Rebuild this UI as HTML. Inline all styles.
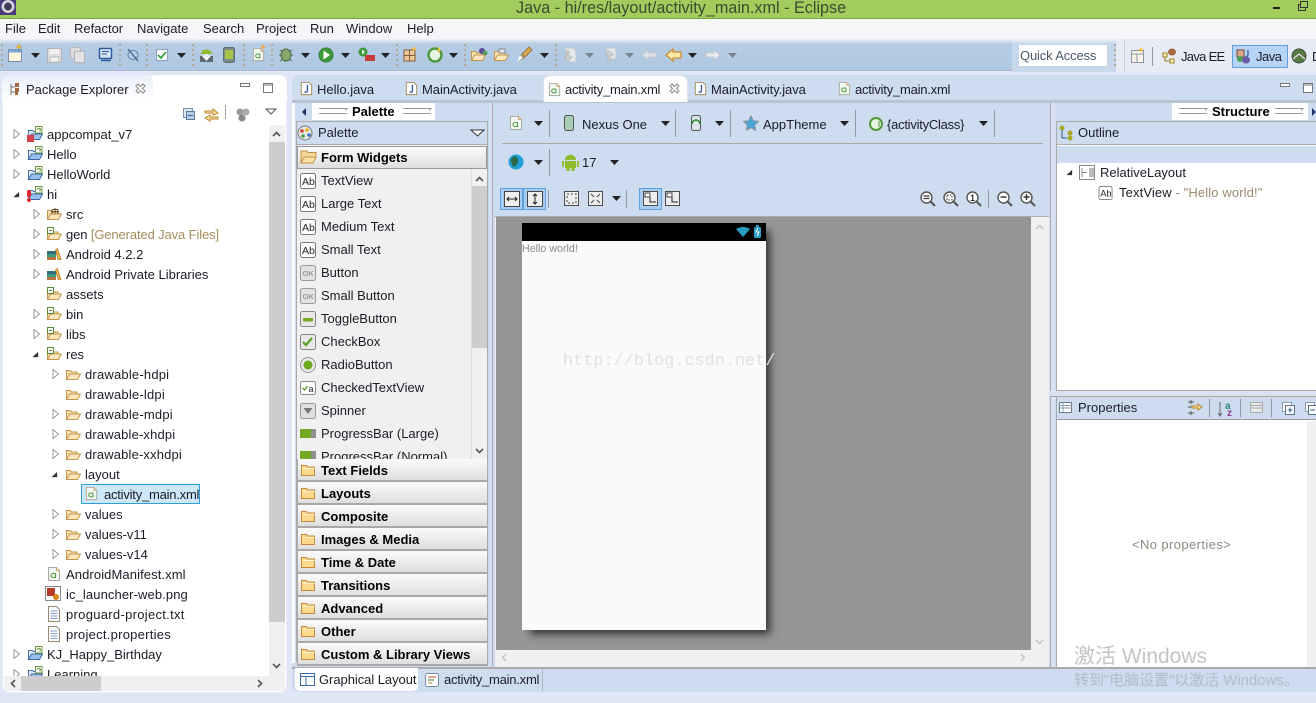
<!DOCTYPE html>
<html><head><meta charset="utf-8"><style>
html,body{margin:0;padding:0}
body{position:relative;width:1316px;height:703px;overflow:hidden;background:#dfe6f5;font:13px/20px "Liberation Sans","Noto Sans CJK SC",sans-serif;color:#1c1c28}
div{position:absolute;box-sizing:border-box}
svg{position:absolute;left:0;top:0;overflow:visible}
.t{white-space:nowrap;height:20px}
.b{font-weight:bold;color:#000}
.cat{left:297px;width:191px;height:23px;background:linear-gradient(#fbfbfb,#dedede);border-bottom:2px solid #a8a8a8;border-right:1px solid #aaa;border-left:1px solid #aaa}
.sep{width:1px;background:#8b98a8}
.dots{width:2px;height:24px;top:44px;background:repeating-linear-gradient(#b0a98f 0 2px,transparent 2px 5px)}
.am{letter-spacing:-.22px}
</style></head><body>
<svg width="0" height="0" style="position:absolute"><defs>
<symbol id="fo" viewBox="0 0 16 16"><path d="M1.5 13.5V4.5h4l1 1.5h5.500v2" fill="#f9e2b4" stroke="#c4954a"/><path d="M1.500 13.500l3-5.500h11l-3 5.500z" fill="#fbe6bd" stroke="#c4954a"/></symbol>
<symbol id="fa" viewBox="0 0 16 16"><use href="#fo" width="16" height="16"/><rect x="1.500" y="1.500" width="6" height="6" fill="#fff" stroke="#5c8a3a"/><path d="M3 4.500h3" stroke="#5c8a3a"/></symbol>
<symbol id="pk" viewBox="0 0 16 16"><use href="#fo" width="16" height="16"/><path d="M6 3.500h6v5M6 3.500v4.500M9 2v6M5 5.500h8" stroke="#6e4a2a" fill="none"/></symbol>
<symbol id="pr" viewBox="0 0 16 16"><path d="M1.500 13.500V4.500h4l1 1h5v3" fill="#dfeafa" stroke="#4a6ea8"/><path d="M1.500 13.500l3-5.500h11l-3 5.500z" fill="#9cc0ee" stroke="#3e6aa8"/><rect x="8.500" y=".5" width="6.500" height="6.500" fill="#fff" stroke="#6f9440"/><path d="M10.500 3.800a1.500 1.500 0 1 1 2.600 1M13 2.500v3" stroke="#6f9440" fill="none"/></symbol>
<symbol id="fc" viewBox="0 0 16 16"><path d="M1.500 13.500V3.500h5l1 1.500h7v8.500z" fill="#fcd98c" stroke="#c48a3a"/><path d="M2 6.500h12.500" stroke="#fff1c8"/></symbol>
<symbol id="ab" viewBox="0 0 16 16"><rect x=".5" y=".5" width="15" height="15" rx="2" fill="#fff" stroke="#777"/><text x="2" y="12" font-family="Liberation Sans" font-size="10.500" fill="#222">Ab</text></symbol>
<symbol id="ok" viewBox="0 0 16 16"><rect x=".5" y=".5" width="15" height="15" rx="2" fill="#e2e2e2" stroke="#9a9a9a"/><text x="2.500" y="11" font-family="Liberation Sans" font-size="7.500" font-weight="bold" fill="#9a9a9a">OK</text></symbol>
<symbol id="xm" viewBox="0 0 16 16"><path d="M2.500 1.500h8l3 3v10h-11z" fill="#f2f7f4" stroke="#a8a8a0"/><path d="M10.500 1.500v3h3" fill="#f5e4c0" stroke="#c8a870"/><path d="M9.500 7.500H7a2 2 0 0 0 0 4h2.500v-4" fill="none" stroke="#4f9a3c" stroke-width="1.100"/></symbol>
<symbol id="jv" viewBox="0 0 16 16"><path d="M2.500 1.500h8l3 3v10h-11z" fill="#fff" stroke="#a58c5c"/><path d="M9 4v6.500c0 1.500-2 1.800-3 .8" fill="none" stroke="#3e5e9e" stroke-width="1.500"/></symbol>
<symbol id="tx" viewBox="0 0 16 16"><path d="M2.500 .5h8l3 3v12h-11z" fill="#f6f9fd" stroke="#9a8a6c"/><path d="M4.500 5h7M4.500 7.500h7M4.500 10h7M4.500 12.500h7" stroke="#8ca4c8"/></symbol>
<symbol id="lb" viewBox="0 0 16 16"><rect x="1" y="11" width="9" height="3" fill="#b8733e"/><rect x="1" y="8" width="9" height="3" fill="#3d9a80"/><rect x="1" y="5" width="9" height="3" fill="#2f6e7a"/><path d="M9.500 4l2-1.500 3.500 11h-3z" fill="#e9b14a" stroke="#b07a28" stroke-width=".7"/></symbol>
<symbol id="cl" viewBox="0 0 8 10"><path d="M1 .5l5.500 4.500L1 9.500z" fill="#fff" stroke="#9a9a9a"/></symbol>
<symbol id="op" viewBox="0 0 8 8"><path d="M.5 7L7 1v6z" fill="#333"/></symbol>
<symbol id="dr" viewBox="0 0 9 5"><path d="M0 0h9L4.500 5z" fill="#222"/></symbol>
<symbol id="dg" viewBox="0 0 9 5"><path d="M0 0h9L4.500 5z" fill="#7a8490"/></symbol>
<symbol id="zm" viewBox="0 0 16 16"><circle cx="6.500" cy="6.500" r="5.500" fill="#fff" stroke="#555" stroke-width="1.400"/><path d="M10.500 10.500l4.500 4.500" stroke="#555" stroke-width="2"/></symbol>
<symbol id="box" viewBox="0 0 16 16"><rect x=".5" y=".5" width="15" height="15" fill="#eee" stroke="#444"/></symbol>
<symbol id="min" viewBox="0 0 10 6"><rect x=".5" y=".5" width="9" height="3" fill="#fff" stroke="#777"/></symbol>
<symbol id="max" viewBox="0 0 10 10"><rect x=".5" y=".5" width="9" height="9" fill="#fff" stroke="#777"/><path d="M.5 2h9" stroke="#777"/></symbol>
<symbol id="x" viewBox="0 0 11 11"><path d="M1 3l2-2 2.500 2.500L8 1l2 2-2.500 2.500L10 8l-2 2-2.500-2.500L3 10 1 8l2.500-2.500z" fill="#fff" stroke="#8a8a8a"/></symbol>
</defs></svg>

<div style="left:0;top:0;width:1316px;height:18px;background:#a2cd5c"></div>
<div style="left:0;top:18px;width:1316px;height:1px;background:#7da33e"></div>
<div style="left:0;top:0;width:16px;height:15px;background:#4d3b7d"></div>
<div class="t" style="left:516px;top:-2px;font-size:16.200px;color:#3a4a32">Java - hi/res/layout/activity_main.xml - Eclipse</div>

<div style="left:0;top:19px;width:1316px;height:20px;background:#f5f6f7"></div>
<div class="t" style="left:5px;top:19px">File</div>
<div class="t" style="left:38px;top:19px">Edit</div>
<div class="t" style="left:74px;top:19px">Refactor</div>
<div class="t" style="left:137px;top:19px">Navigate</div>
<div class="t" style="left:203px;top:19px">Search</div>
<div class="t" style="left:256px;top:19px">Project</div>
<div class="t" style="left:310px;top:19px">Run</div>
<div class="t" style="left:346px;top:19px">Window</div>
<div class="t" style="left:407px;top:19px">Help</div>

<div style="left:0;top:39px;width:1316px;height:33px;background:#e7ebf6"></div>
<div style="left:0;top:39px;width:1012px;height:32px;background:linear-gradient(#eef1f6,#b5cce4 5px,#afc8e2);border-bottom:1px solid #a9b7d2"></div>
<div style="left:1012px;top:39px;width:104px;height:33px;background:linear-gradient(#eef1f6,#c5d7ec 5px,#c8d9ec)"></div>
<div style="left:1018px;top:44px;width:90px;height:23px;background:#fff;border:1px solid #c8d4e4"></div>
<div class="t" style="left:1020px;top:46px;color:#4c5a68;letter-spacing:-.15px">Quick Access</div>
<div style="left:1124px;top:39px;width:192px;height:33px;background:#e7ebf6;border-left:1px solid #c5cfdf"></div>
<div style="left:1232px;top:45px;width:56px;height:23px;background:#b6d4f5;border:1px solid #5ea0e0"></div>
<div class="t" style="left:1181px;top:47px;letter-spacing:-.7px">Java EE</div>
<div class="t" style="left:1256px;top:47px;letter-spacing:-.5px">Java</div>
<div class="t" style="left:1312px;top:47px">D</div>
<div class="sep" style="left:1152px;top:47px;height:19px"></div>

<div class="dots" style="left:1px"></div><div class="dots" style="left:119px"></div><div class="dots" style="left:146px"></div><div class="dots" style="left:192px"></div><div class="dots" style="left:243px"></div><div class="dots" style="left:271px"></div><div class="dots" style="left:396px"></div><div class="dots" style="left:464px"></div><div class="dots" style="left:555px"></div><div class="dots" style="left:1114px"></div>

<svg width="1316" height="703">
<rect x="8.500" y="49.500" width="13" height="12" fill="#fdf6df" stroke="#7b8ba5"/><path d="M8.500 49.500h13v3h-13z" fill="#7ba4d6"/><path d="M19 44l1 2 2 .5-2 1-1 2-1-2-2-1 2-.5z" fill="#f5c242" stroke="#c08a20" stroke-width=".5"/>
<use href="#dr" x="31" y="53" width="9" height="5"/>
<rect x="47.500" y="48.500" width="14" height="14" rx="1" fill="#dedede" stroke="#b4b4b4"/><rect x="50" y="49" width="9" height="5" fill="#f2f2f2"/><rect x="50" y="57" width="9" height="5" fill="#f2f2f2" stroke="#bbb"/>
<rect x="70.500" y="47.500" width="10" height="11" fill="#ddd" stroke="#bbb"/><rect x="74.500" y="51.500" width="10" height="11" fill="#e4e4e4" stroke="#b4b4b4"/>
<rect x="99.500" y="48.500" width="12" height="10" rx="1" fill="#d8e4f4" stroke="#2a5c9e" stroke-width="1.500"/><path d="M102 51.500h7M102 54h5" stroke="#2a5c9e"/><path d="M101 60.500h10" stroke="#2a5c9e" stroke-width="1.500"/>
<ellipse cx="133" cy="55" rx="5" ry="4.500" fill="#b8d0ec" stroke="#5c7ca8"/><path d="M128 49l10 12" stroke="#3c5c88" stroke-width="1.300"/>
<rect x="156.500" y="49.500" width="11" height="11" fill="#fff" stroke="#8aa0bc"/><path d="M158 55l3 3 5-6" stroke="#2f9a3c" stroke-width="1.700" fill="none"/>
<use href="#dr" x="177" y="53" width="9" height="5"/>
<path d="M200 56h13v6h-13z" fill="#5e6870"/><path d="M206.500 50v9M203 55.500l3.500 4 3.500-4" stroke="#fff" stroke-width="2" fill="none"/><path d="M201 54c0-6 11-6 11 0z" fill="#8fbb2c"/>
<rect x="223.500" y="47.500" width="11" height="15" rx="2" fill="#7d8a8c" stroke="#5c6c6c"/><rect x="225" y="50" width="8" height="9" fill="#a4c644"/>
<use href="#xm" x="251" y="47" width="15" height="15"/><path d="M263 44l1 2 2 .5-2 1-1 2-1-2-2-1 2-.5z" fill="#f5a842"/>
<ellipse cx="286" cy="55" rx="5" ry="6" fill="#8aa86c" stroke="#4e6a48"/><path d="M280 50l3 2M292 50l-3 2M279 55h3M293 55h-3M280 61l3-2M292 61l-3-2" stroke="#4e6a48"/>
<use href="#dr" x="301" y="53" width="9" height="5"/>
<circle cx="326" cy="55" r="7" fill="#3f9a3a" stroke="#2f7f30"/><path d="M323.500 50.500l6.500 4.500-6.500 4.500z" fill="#fff"/>
<use href="#dr" x="341" y="53" width="9" height="5"/>
<circle cx="363" cy="52" r="4.500" fill="#3f9a3a"/><path d="M362 49.500l3 2.500-3 2.500z" fill="#fff"/><rect x="365" y="55" width="10" height="6" fill="#c83a3a"/>
<use href="#dr" x="381" y="53" width="9" height="5"/>
<rect x="404" y="50" width="11" height="11" fill="#e8c89c" stroke="#8a5a30"/><path d="M404 55.500h11M409.500 50v11" stroke="#8a5a30"/><path d="M414 46l1 2 2 .5-2 1-1 2-1-2-2-1 2-.5z" fill="#f5c242"/>
<circle cx="435" cy="55" r="6.500" fill="#eaf4e4" stroke="#4f9a3c" stroke-width="2.500"/><path d="M438 47l3 3-3 3z" fill="#f5c242"/>
<use href="#dr" x="449" y="53" width="9" height="5"/>
<use href="#fo" x="470" y="47" width="16" height="16"/><circle cx="482" cy="51" r="3" fill="#5a4a9a"/><circle cx="485" cy="53" r="2.500" fill="#5a9a5c"/>
<use href="#fo" x="493" y="47" width="16" height="16"/><rect x="499" y="49" width="6" height="4" fill="#e0e4ea" stroke="#888"/>
<path d="M518 61l3-6 3 3zM522 54l7-7 3 3-7 7z" fill="#d9a64a" stroke="#8a6a3a" stroke-width=".8"/><path d="M517 62l3-7 3 3z" fill="#fff"/>
<use href="#dr" x="540" y="53" width="9" height="5"/>
<path d="M565 48h8l3 3v11h-8z" fill="#e4e8ee" stroke="#c0c4c8"/><path d="M567 51v6h-3l4 4 4-4h-3v-6z" fill="#d4d6d4" stroke="#b8b8b0"/>
<use href="#dg" x="585" y="53" width="9" height="5"/>
<path d="M606 48h10v11h-6z" fill="#e4e8ee" stroke="#c0c4c8"/><path d="M608 61v-6h-3l4-4 4 4h-3v6z" fill="#d4d6d4" stroke="#b8b8b0"/>
<use href="#dg" x="625" y="53" width="9" height="5"/>
<path d="M642 55l6-5v3h8v4h-8v3z" fill="#dfe2e6" stroke="#c4c8cc"/>
<path d="M666 55l7-6v3h8v6h-8v3z" fill="#fde8a8" stroke="#c89030" stroke-width="1.300"/>
<use href="#dr" x="688" y="53" width="9" height="5"/>
<path d="M720 55l-6-5v3h-8v4h8v3z" fill="#e8ebef" stroke="#c4c8cc"/>
<use href="#dg" x="728" y="53" width="9" height="5"/>
<rect x="1131.500" y="50.500" width="12" height="12" fill="#f8f4e8" stroke="#8a94a4"/><path d="M1131 54h12M1137 54v9" stroke="#8a94a4"/><path d="M1141 47l1 2 2 .5-2 1-1 2-1-2-2-1 2-.5z" fill="#f5c242"/>
<rect x="1163" y="53" width="4" height="4" fill="#fdf0c0" stroke="#a08020"/><rect x="1170" y="59" width="4" height="4" fill="#fdf0c0" stroke="#a08020"/><path d="M1165 57v4h5" stroke="#a08020" fill="none"/><ellipse cx="1172" cy="52" rx="4" ry="3.500" fill="#a5683c"/>
<rect x="1237" y="50" width="7" height="7" fill="#d4a888" stroke="#7a4a38"/><circle cx="1240" cy="59" r="3" fill="#48a050"/><ellipse cx="1246" cy="60" rx="4" ry="3.500" fill="#6a58a8"/><path d="M1248 50v5c0 1-1 2-2 1" stroke="#3a5a9e" stroke-width="1.300" fill="none"/>
<circle cx="1299" cy="56" r="7" fill="#5a7a4a" stroke="#3a4a38"/><path d="M1293 59l6-5 6 5" stroke="#fff" fill="none"/>
</svg>

<!-- Package explorer -->
<div style="left:2px;top:75px;width:285px;height:618px;background:#fff;border-radius:7px;border:1px solid #e8edf6"></div>
<div style="left:2px;top:75px;width:151px;height:25px;background:linear-gradient(#e9eef8,#fff);border-radius:7px 7px 0 0"></div>
<div style="left:153px;top:75px;width:134px;height:25px;background:#fff;border-radius:0 7px 0 0"></div>
<div class="t" style="left:26px;top:80px">Package Explorer</div>
<svg width="1316" height="703">
<path d="M11 84v11M11 87h4M11 92h4" stroke="#777" fill="none"/><rect x="15" y="83" width="4" height="4" fill="#a5683c"/><rect x="15" y="88" width="4" height="4" fill="#a5683c"/><rect x="15" y="92" width="3" height="3" fill="#a5683c"/>
<use href="#x" x="135" y="83" width="11" height="11"/>
<use href="#min" x="240" y="83" width="10" height="6"/>
<use href="#max" x="263" y="83" width="10" height="10"/>
<rect x="183.500" y="108.500" width="9" height="9" fill="#dce6f2" stroke="#7890a8"/><rect x="186.500" y="111.500" width="8" height="8" fill="#b8cee4" stroke="#5c7890"/><path d="M188 115.500h5" stroke="#2a5c8e"/>
<path d="M205 111h8v-2l5 4-5 2v-2h-8zM218 117h-8v-2l-5 3 5 3v-2h8z" fill="#fde0a0" stroke="#b98a2a"/>
<path d="M225.500 105v14" stroke="#9ca4ac"/>
<circle cx="240" cy="112" r="3.500" fill="#999"/><circle cx="246" cy="112" r="3.500" fill="#aaa"/><circle cx="242" cy="118" r="3.500" fill="#888"/>
<path d="M266 109h10l-5 5z" fill="#fff" stroke="#555"/>
</svg>

<!-- tree text -->
<div style="left:4px;top:125px;width:265px;height:551px;overflow:hidden">
<div style="left:77px;top:359px;width:119px;height:20px;background:#cce8f8;border:1px solid #2f9fd8"></div>
<svg width="265" height="551" style="left:-4px;top:-125px">
<use href="#cl" x="13" y="129" width="8" height="10"/><use href="#pr" x="27" y="126" width="16" height="16"/><rect x="27" y="135" width="7" height="7" fill="#d8404c"/>
<use href="#cl" x="13" y="149" width="8" height="10"/><use href="#pr" x="27" y="146" width="16" height="16"/>
<use href="#cl" x="13" y="169" width="8" height="10"/><use href="#pr" x="27" y="166" width="16" height="16"/>
<use href="#op" x="13" y="191" width="7" height="7"/><use href="#pr" x="27" y="186" width="16" height="16"/><rect x="27" y="190" width="4" height="7" rx="1.500" fill="#e02a30"/><circle cx="29" cy="200" r="2" fill="#e02a30"/>
<use href="#cl" x="33" y="209" width="8" height="10"/><use href="#pk" x="46" y="206" width="16" height="16"/>
<use href="#cl" x="33" y="229" width="8" height="10"/><use href="#fa" x="46" y="226" width="16" height="16"/>
<use href="#cl" x="33" y="249" width="8" height="10"/><use href="#lb" x="46" y="246" width="16" height="16"/>
<use href="#cl" x="33" y="269" width="8" height="10"/><use href="#lb" x="46" y="266" width="16" height="16"/>
<use href="#fa" x="46" y="286" width="16" height="16"/>
<use href="#cl" x="33" y="309" width="8" height="10"/><use href="#fa" x="46" y="306" width="16" height="16"/>
<use href="#cl" x="33" y="329" width="8" height="10"/><use href="#fa" x="46" y="326" width="16" height="16"/>
<use href="#op" x="32" y="351" width="7" height="7"/><use href="#fa" x="46" y="346" width="16" height="16"/>
<use href="#cl" x="52" y="369" width="8" height="10"/><use href="#fo" x="65" y="366" width="16" height="16"/>
<use href="#fo" x="65" y="386" width="16" height="16"/>
<use href="#cl" x="52" y="409" width="8" height="10"/><use href="#fo" x="65" y="406" width="16" height="16"/>
<use href="#cl" x="52" y="429" width="8" height="10"/><use href="#fo" x="65" y="426" width="16" height="16"/>
<use href="#cl" x="52" y="449" width="8" height="10"/><use href="#fo" x="65" y="446" width="16" height="16"/>
<use href="#op" x="51" y="471" width="7" height="7"/><use href="#fo" x="65" y="466" width="16" height="16"/>
<use href="#xm" x="84" y="486" width="15" height="15"/>
<use href="#cl" x="52" y="509" width="8" height="10"/><use href="#fo" x="65" y="506" width="16" height="16"/>
<use href="#cl" x="52" y="529" width="8" height="10"/><use href="#fo" x="65" y="526" width="16" height="16"/>
<use href="#cl" x="52" y="549" width="8" height="10"/><use href="#fo" x="65" y="546" width="16" height="16"/>
<use href="#xm" x="46" y="566" width="16" height="16"/>
<rect x="45.500" y="586.500" width="15" height="14" fill="#fff" stroke="#888"/><rect x="47" y="588" width="8" height="8" fill="#b83a28"/><circle cx="56" cy="597" r="3" fill="#d88a1c"/>
<use href="#tx" x="46" y="606" width="16" height="16"/>
<use href="#tx" x="46" y="626" width="16" height="16"/>
<use href="#cl" x="13" y="649" width="8" height="10"/><use href="#pr" x="27" y="646" width="16" height="16"/>
<use href="#cl" x="13" y="669" width="8" height="10"/><use href="#pr" x="27" y="666" width="16" height="16"/>
</svg>
<div class="t" style="left:43px;top:0">appcompat_v7</div>
<div class="t" style="left:43px;top:20px">Hello</div>
<div class="t" style="left:43px;top:40px">HelloWorld</div>
<div class="t" style="left:43px;top:60px">hi</div>
<div class="t" style="left:62px;top:80px">src</div>
<div class="t" style="left:62px;top:100px;letter-spacing:-.12px">gen <span style="color:#a58c5c">[Generated Java Files]</span></div>
<div class="t" style="left:62px;top:120px">Android 4.2.2</div>
<div class="t" style="left:62px;top:140px">Android Private Libraries</div>
<div class="t" style="left:62px;top:160px">assets</div>
<div class="t" style="left:62px;top:180px">bin</div>
<div class="t" style="left:62px;top:200px">libs</div>
<div class="t" style="left:62px;top:220px">res</div>
<div class="t" style="left:81px;top:240px;letter-spacing:.2px">drawable-hdpi</div>
<div class="t" style="left:81px;top:260px;letter-spacing:.2px">drawable-ldpi</div>
<div class="t" style="left:81px;top:280px;letter-spacing:.2px">drawable-mdpi</div>
<div class="t" style="left:81px;top:300px;letter-spacing:.15px">drawable-xhdpi</div>
<div class="t" style="left:81px;top:320px;letter-spacing:.15px">drawable-xxhdpi</div>
<div class="t" style="left:81px;top:340px">layout</div>
<div class="t am" style="left:100px;top:360px">activity_main.xml</div>
<div class="t" style="left:81px;top:380px">values</div>
<div class="t" style="left:81px;top:400px">values-v11</div>
<div class="t" style="left:81px;top:420px">values-v14</div>
<div class="t" style="left:62px;top:440px;letter-spacing:.1px">AndroidManifest.xml</div>
<div class="t" style="left:62px;top:460px;letter-spacing:.1px">ic_launcher-web.png</div>
<div class="t" style="left:62px;top:480px;letter-spacing:.3px">proguard-project.txt</div>
<div class="t" style="left:62px;top:500px;letter-spacing:.25px">project.properties</div>
<div class="t" style="left:43px;top:520px">KJ_Happy_Birthday</div>
<div class="t" style="left:43px;top:540px">Learning</div>
</div>
<div style="left:269px;top:125px;width:16px;height:551px;background:#f0f0f0"></div>
<div style="left:269px;top:142px;width:16px;height:480px;background:#cdcdcd"></div>
<div style="left:4px;top:676px;width:281px;height:15px;background:#f0f0f0"></div>
<div style="left:21px;top:676px;width:80px;height:15px;background:#cdcdcd"></div>
<svg width="1316" height="703"><g fill="none" stroke="#555" stroke-width="1.600"><path d="M273 136l3.500-3.500 3.500 3.500M273 664l3.500 3.500 3.500-3.500M15 680l-3.500 3.500 3.500 3.500M258 680l3.500 3.500-3.500 3.500"/></g></svg>

<!-- Editor -->
<div style="left:292px;top:75px;width:1024px;height:616px;background:#cddcee;border-radius:7px 0 0 7px"></div>
<div style="left:292px;top:100px;width:1024px;height:3px;background:#b8c4d4"></div>
<div style="left:543px;top:75px;width:145px;height:27px;background:#fff;border-radius:7px 7px 0 0;border:1px solid #d8e2f0;border-bottom:0"></div>
<div class="t" style="left:317px;top:80px">Hello.java</div>
<div class="t" style="left:422px;top:80px;letter-spacing:-.06px">MainActivity.java</div>
<div class="t am" style="left:565px;top:80px">activity_main.xml</div>
<div class="t" style="left:711px;top:80px;letter-spacing:-.06px">MainActivity.java</div>
<div class="t am" style="left:855px;top:80px">activity_main.xml</div>
<svg width="1316" height="703">
<use href="#jv" x="299" y="81" width="15" height="15"/><use href="#jv" x="404" y="81" width="15" height="15"/><use href="#xm" x="547" y="82" width="15" height="15"/><use href="#jv" x="693" y="81" width="15" height="15"/><use href="#xm" x="837" y="81" width="15" height="15"/>
<use href="#x" x="669" y="83" width="11" height="11"/>
<use href="#min" x="1280" y="83" width="10" height="6"/><use href="#max" x="1303" y="83" width="10" height="10"/>
</svg>

<!-- Palette -->
<div style="left:292px;top:103px;width:3px;height:560px;background:#fff"></div>
<div style="left:312px;top:103px;width:123px;height:17px;background:#fff"></div>
<div class="t b" style="left:352px;top:102px">Palette</div>
<svg width="1316" height="703"><path d="M306 108v8l-4-4z" fill="#1a3a6a"/><g fill="none" stroke="#999"><path d="M319 108.500h28l-2 2M319 113.500h28M403 108.500h28l-2 2M403 113.500h28"/></g></svg>
<div style="left:296px;top:121px;width:192px;height:541px;background:#f0f0f0;border:1px solid #aaa"></div>
<div style="left:297px;top:122px;width:190px;height:23px;background:#cddcee;border-bottom:1px solid #aaa"></div>
<div class="t" style="left:318px;top:123px">Palette</div>
<div style="left:297px;top:146px;width:190px;height:23px;background:linear-gradient(#fbfbfb,#dedede);border:1px solid #999"></div>
<div class="t b" style="left:321px;top:148px">Form Widgets</div>
<div style="left:471px;top:169px;width:16px;height:291px;background:#f0f0f0;border-left:1px solid #e0e0e0"></div>
<div style="left:472px;top:186px;width:15px;height:162px;background:#cdcdcd"></div>
<div class="t" style="left:321px;top:171px">TextView</div>
<div class="t" style="left:321px;top:194px">Large Text</div>
<div class="t" style="left:321px;top:217px">Medium Text</div>
<div class="t" style="left:321px;top:240px">Small Text</div>
<div class="t" style="left:321px;top:263px">Button</div>
<div class="t" style="left:321px;top:286px">Small Button</div>
<div class="t" style="left:321px;top:309px">ToggleButton</div>
<div class="t" style="left:321px;top:332px">CheckBox</div>
<div class="t" style="left:321px;top:355px">RadioButton</div>
<div class="t" style="left:321px;top:378px">CheckedTextView</div>
<div class="t" style="left:321px;top:401px">Spinner</div>
<div class="t" style="left:321px;top:424px">ProgressBar (Large)</div>
<div class="t" style="left:321px;top:447px">ProgressBar (Normal)</div>
<svg width="1316" height="703">
<circle cx="305" cy="133" r="7" fill="#e8e8e8" stroke="#777"/><circle cx="302" cy="131" r="1.800" fill="#d84030"/><circle cx="307" cy="130" r="1.800" fill="#e8b020"/><circle cx="309" cy="135" r="1.800" fill="#3a70c0"/><circle cx="303" cy="136" r="1.800" fill="#40a040"/>
<path d="M471 130h13l-6.500 6z" fill="#fff" stroke="#333"/>
<path d="M301 163V151h6l1 1.500h8V156" fill="#f5d8a0" stroke="#c49040"/><path d="M301 163l3-6h12l-3 6z" fill="#fde0a8" stroke="#c49040"/>
<use href="#ab" x="300" y="173" width="16" height="16"/><use href="#ab" x="300" y="196" width="16" height="16"/><use href="#ab" x="300" y="219" width="16" height="16"/><use href="#ab" x="300" y="242" width="16" height="16"/>
<use href="#ok" x="300" y="265" width="16" height="16"/><use href="#ok" x="300" y="288" width="16" height="16"/>
<rect x="300.500" y="311.500" width="15" height="15" rx="2" fill="#e8e8e8" stroke="#888"/><rect x="303" y="318" width="10" height="3.500" rx="1" fill="#74a820"/>
<rect x="300.500" y="334.500" width="15" height="15" rx="2" fill="#e8e8e8" stroke="#888"/><path d="M303 342l3 3 6-7" stroke="#5ca020" stroke-width="2.200" fill="none"/>
<circle cx="308" cy="365" r="7.500" fill="#e8e8e8" stroke="#999"/><circle cx="308" cy="365" r="4.500" fill="#6aa81e"/>
<rect x="300.500" y="381.500" width="15" height="13" rx="2" fill="#fff" stroke="#888"/><path d="M302.500 388l2 2 3-4" stroke="#5ca020" stroke-width="1.300" fill="none"/><text x="308.500" y="392" font-size="9" font-family="Liberation Sans" fill="#222">a</text>
<rect x="300.500" y="403.500" width="15" height="15" rx="2" fill="#e0e0e0" stroke="#999"/><path d="M303.500 408h9l-4.500 6z" fill="#777"/>
<rect x="300" y="429" width="16" height="9" fill="#909090"/><rect x="300" y="429" width="11" height="9" fill="#74a820"/>
<rect x="300" y="451" width="16" height="9" fill="#909090"/><rect x="300" y="451" width="11" height="9" fill="#74a820"/>
<g fill="none" stroke="#555" stroke-width="1.600"><path d="M476 181l3.500-3.500 3.500 3.500M476 449l3.500 3.500 3.500-3.500"/></g>
</svg>
<div class="cat" style="top:459px"></div>
<div class="cat" style="top:482px"></div>
<div class="cat" style="top:505px"></div>
<div class="cat" style="top:528px"></div>
<div class="cat" style="top:551px"></div>
<div class="cat" style="top:574px"></div>
<div class="cat" style="top:597px"></div>
<div class="cat" style="top:620px"></div>
<div class="cat" style="top:643px"></div>
<div class="t b" style="left:321px;top:461px">Text Fields</div>
<div class="t b" style="left:321px;top:484px">Layouts</div>
<div class="t b" style="left:321px;top:507px">Composite</div>
<div class="t b" style="left:321px;top:530px">Images &amp; Media</div>
<div class="t b" style="left:321px;top:553px">Time &amp; Date</div>
<div class="t b" style="left:321px;top:576px">Transitions</div>
<div class="t b" style="left:321px;top:599px">Advanced</div>
<div class="t b" style="left:321px;top:622px">Other</div>
<div class="t b" style="left:321px;top:645px">Custom &amp; Library Views</div>
<svg width="1316" height="703">
<use href="#fc" x="300" y="462" width="16" height="16"/><use href="#fc" x="300" y="485" width="16" height="16"/><use href="#fc" x="300" y="508" width="16" height="16"/><use href="#fc" x="300" y="531" width="16" height="16"/><use href="#fc" x="300" y="554" width="16" height="16"/><use href="#fc" x="300" y="577" width="16" height="16"/><use href="#fc" x="300" y="600" width="16" height="16"/><use href="#fc" x="300" y="623" width="16" height="16"/><use href="#fc" x="300" y="646" width="16" height="16"/>
</svg>

<!-- Canvas -->
<div style="left:490px;top:103px;width:3px;height:563px;background:#d8e2f0;border-right:1px solid #aab"></div>
<div style="left:502px;top:143px;width:541px;height:1px;background:#a8a8a8"></div>
<div style="left:495px;top:216px;width:554px;height:451px;background:#f0f0f0;border-top:1px solid #aaa"></div>
<div style="left:496px;top:217px;width:535px;height:433px;background:#969696"></div>
<div style="left:536px;top:237px;width:228px;height:391px;background:#2a2a2a;box-shadow:0 0 8px 6px #333"></div>
<div style="left:522px;top:223px;width:244px;height:407px;background:#fafafa"></div>
<div style="left:522px;top:223px;width:244px;height:18px;background:#000"></div>
<div class="t" style="left:522px;top:239px;font-size:10.700px;color:#8a8a8a">Hello world!</div>
<div class="t" style="left:563px;top:352px;font:16.800px/20px 'Liberation Mono',monospace;color:#e0e0dc;letter-spacing:.05px">http://blog.csdn.net/</div>

<div class="t" style="left:582px;top:115px">Nexus One</div>
<div class="t" style="left:763px;top:115px">AppTheme</div>
<div class="t" style="left:887px;top:115px;letter-spacing:-.25px">{activityClass}</div>
<div class="t" style="left:582px;top:153px">17</div>
<div class="sep" style="left:549px;top:110px;height:27px"></div><div class="sep" style="left:675px;top:110px;height:27px"></div><div class="sep" style="left:730px;top:110px;height:27px"></div><div class="sep" style="left:855px;top:110px;height:27px"></div><div class="sep" style="left:994px;top:110px;height:27px"></div>
<div class="sep" style="left:549px;top:149px;height:27px"></div>
<div class="sep" style="left:548px;top:190px;height:18px"></div><div class="sep" style="left:626px;top:190px;height:18px"></div>
<div class="sep" style="left:988px;top:190px;height:18px"></div>
<div style="left:500px;top:188px;width:23px;height:22px;background:#a8cdf2;border:1px solid #5ea0e0"></div>
<div style="left:523px;top:188px;width:23px;height:22px;background:#a8cdf2;border:1px solid #5ea0e0"></div>
<div style="left:639px;top:188px;width:23px;height:22px;background:#a8cdf2;border:1px solid #5ea0e0"></div>
<svg width="1316" height="703">
<use href="#xm" x="508" y="115" width="16" height="16"/><use href="#dr" x="534" y="121" width="9" height="5"/>
<rect x="564.500" y="115.500" width="9" height="15" rx="2" fill="#a8ccb4" stroke="#555"/><use href="#dr" x="661" y="121" width="9" height="5"/>
<rect x="691.500" y="115.500" width="9" height="15" rx="2" fill="#e0e4e8" stroke="#555"/><path d="M692 124a4 4 0 0 1 8 0" stroke="#1f8a2a" stroke-width="1.500" fill="none"/><use href="#dr" x="715" y="121" width="9" height="5"/>
<path d="M751 116l2.300 4.700 5.200.7-3.800 3.600.9 5.200-4.600-2.500-4.600 2.500.9-5.200-3.800-3.600 5.200-.7z" fill="#4aa8d8" stroke="#8a9098"/><use href="#dr" x="840" y="121" width="9" height="5"/>
<circle cx="876" cy="124" r="6" fill="#eaf4e4" stroke="#4f9a3c" stroke-width="2"/><path d="M879 121v6" stroke="#4f9a3c"/><use href="#dr" x="979" y="121" width="9" height="5"/>
<circle cx="516" cy="162" r="7.500" fill="#20a0d8"/><path d="M514 156c3 1 5 3 4 6s-3 5-5 5c-1-4-3-5-2-8z" fill="#2f6a48"/><use href="#dr" x="534" y="160" width="9" height="5"/>
<path d="M565 160c0-7 11-7 11 0z" fill="#8fbb2c"/><rect x="565" y="161" width="11" height="7" fill="#8fbb2c"/><rect x="562" y="161" width="2" height="6" rx="1" fill="#8fbb2c"/><rect x="577" y="161" width="2" height="6" rx="1" fill="#8fbb2c"/><rect x="566.500" y="168" width="3" height="3" fill="#8fbb2c"/><rect x="571.500" y="168" width="3" height="3" fill="#8fbb2c"/><use href="#dr" x="610" y="160" width="9" height="5"/>
<use href="#box" x="504" y="191" width="16" height="16"/><path d="M507 199h10M509 197l-2 2 2 2M515 197l2 2-2 2" stroke="#222" fill="none"/>
<use href="#box" x="527" y="191" width="16" height="16"/><path d="M535 194v10M533 196l2-2 2 2M533 202l2 2 2-2" stroke="#222" fill="none"/>
<use href="#box" x="564" y="191" width="15" height="15"/><rect x="567" y="194" width="9" height="9" fill="none" stroke="#444" stroke-dasharray="2 2"/>
<use href="#box" x="588" y="191" width="15" height="15"/><path d="M591 194l3 3M600 194l-3 3M591 203l3-3M600 203l-3-3" stroke="#444"/>
<use href="#dr" x="612" y="196" width="9" height="5"/>
<use href="#box" x="643" y="191" width="15" height="15"/><path d="M650 194v8h6" stroke="#222" fill="none"/><rect x="645" y="193" width="5" height="4" fill="#fff" stroke="#444"/>
<use href="#box" x="665" y="191" width="15" height="15"/><path d="M672 194v8h6" stroke="#222" fill="none"/><rect x="667" y="193" width="5" height="4" fill="#fff" stroke="#444"/>
<use href="#zm" x="920" y="191" width="16" height="16"/><path d="M923.500 196h6M923.500 198.500h6" stroke="#333" stroke-width="1.200"/>
<use href="#zm" x="943" y="191" width="16" height="16"/><rect x="947" y="195" width="5" height="5" fill="none" stroke="#333" stroke-dasharray="1.500 1.500"/>
<use href="#zm" x="966" y="191" width="16" height="16"/><text x="970" y="201" font-size="9" font-weight="bold" font-family="Liberation Sans" fill="#333">1</text>
<use href="#zm" x="997" y="191" width="16" height="16"/><path d="M1000.500 197h6" stroke="#333" stroke-width="1.400"/>
<use href="#zm" x="1020" y="191" width="16" height="16"/><path d="M1023.500 197h6M1026.500 194v6" stroke="#333" stroke-width="1.400"/>
<path d="M736 229q7-4 14 0l-7 8z" fill="#2b9ec4"/>
<rect x="754" y="227" width="7" height="11" rx="1" fill="#2b9ec4"/><rect x="756" y="225" width="3" height="2" fill="#2b9ec4"/><path d="M758 228l-2 4h3l-2 4" stroke="#fff" fill="none"/>
<g fill="none" stroke="#c8c8c8" stroke-width="1.600"><path d="M1036 229l3.500-3.500 3.500 3.500M1036 640l3.500 3.500 3.500-3.500M506 654l-3.500 3.500 3.500 3.500M1021 654l3.500 3.500-3.500 3.500"/></g>
</svg>

<!-- Right column -->
<div style="left:1050px;top:103px;width:5px;height:565px;background:#d8e2f0;border-left:1px solid #aab"></div>
<div style="left:1172px;top:103px;width:136px;height:17px;background:#fff"></div>
<div class="t b" style="left:1212px;top:102px">Structure</div>
<svg width="1316" height="703"><g fill="none" stroke="#999"><path d="M1179 108.500h28l-2 2M1179 113.500h28M1275 108.500h28l-2 2M1275 113.500h28"/></g><path d="M1312 108v8l4-4z" fill="#1a3a6a"/></svg>
<div style="left:1056px;top:121px;width:260px;height:270px;background:#fff;border:1px solid #aaa;border-right:0"></div>
<div style="left:1057px;top:122px;width:259px;height:23px;background:#cddcee;border-bottom:1px solid #aaa"></div>
<div style="left:1057px;top:146px;width:259px;height:17px;background:#cddcee"></div>
<div class="t" style="left:1078px;top:123px">Outline</div>
<div class="t" style="left:1100px;top:163px">RelativeLayout</div>
<div class="t" style="left:1119px;top:183px;letter-spacing:.12px">TextView <span style="color:#9a8a6c">- "Hello world!"</span></div>
<svg width="1316" height="703">
<circle cx="1062" cy="128" r="2.500" fill="#a8a828"/><circle cx="1070" cy="133" r="2.500" fill="#a8a828"/><circle cx="1070" cy="138" r="2.500" fill="#a8a828"/><path d="M1062 130v8h5" stroke="#2a5c8e" fill="none"/>
<use href="#op" x="1066" y="169" width="7" height="7"/>
<rect x="1079.500" y="165.500" width="15" height="14" fill="#fff" stroke="#888"/><rect x="1089" y="168" width="5" height="9" fill="#bbb"/><path d="M1082 168v9M1082 172.500h5" stroke="#888"/>
<use href="#ab" x="1098" y="186" width="15" height="14"/>
</svg>
<div style="left:1050px;top:391px;width:266px;height:6px;background:#d8e2f0;border-bottom:1px solid #aaa"></div>
<div style="left:1056px;top:397px;width:260px;height:271px;background:#fff;border-left:1px solid #aaa"></div>
<div style="left:1057px;top:397px;width:259px;height:23px;background:#cddcee;border-bottom:1px solid #999"></div>
<div class="t" style="left:1078px;top:398px">Properties</div>
<div style="left:1307px;top:421px;width:9px;height:246px;background:#f0f0f0"></div>
<div class="t" style="left:1132px;top:535px;color:#8a8a80;letter-spacing:.4px">&lt;No properties&gt;</div>
<div class="sep" style="left:1209px;top:399px;height:18px"></div><div class="sep" style="left:1240px;top:399px;height:18px"></div><div class="sep" style="left:1271px;top:399px;height:18px"></div>
<svg width="1316" height="703">
<rect x="1059.500" y="402.500" width="12" height="10" fill="#fff" stroke="#6a7a90"/><path d="M1059 405.500h13M1059 408h13M1063 403v9" stroke="#8a9ab0"/>
<path d="M1188 402h6M1188 407h6M1188 413h6M1191 400v4M1191 411v4" stroke="#555" fill="none"/><path d="M1192 406h6v-2l4 3-4 3v-2h-6z" fill="#fde0a0" stroke="#b98a2a"/>
<path d="M1220 402v13M1218 413l2 3 2-3" stroke="#666" fill="none"/>
<text x="1225" y="409" font-size="10" font-weight="bold" font-family="Liberation Sans" fill="#2a8a7a">a</text><text x="1227" y="416" font-size="10" font-weight="bold" font-family="Liberation Sans" fill="#8a3a8a">z</text>
<rect x="1250.500" y="402.500" width="12" height="10" fill="#e8e8e8" stroke="#aaa"/><path d="M1250 405.500h12M1250 408h12" stroke="#aaa"/>
<rect x="1282.500" y="402.500" width="9" height="9" fill="#fff" stroke="#8a9ab0"/><rect x="1285.500" y="405.500" width="9" height="9" fill="#fff" stroke="#5c6c84"/><path d="M1287.500 410h5M1290 407.500v5" stroke="#2a5c8e"/>
<rect x="1305.500" y="402.500" width="9" height="9" fill="#fff" stroke="#8a9ab0"/><rect x="1308.500" y="405.500" width="8" height="9" fill="#fff" stroke="#5c6c84"/><path d="M1310 410h5" stroke="#2a5c8e"/>
</svg>

<!-- Bottom tabs -->
<div style="left:292px;top:667px;width:1024px;height:25px;background:#cddcee;border-top:2px solid #aaa;border-radius:0 0 0 7px"></div>
<div style="left:295px;top:668px;width:123px;height:23px;background:#fff;border-radius:0 0 5px 5px"></div>
<div style="left:542px;top:669px;width:1px;height:22px;background:#aab4c4"></div>
<div class="t" style="left:319px;top:670px;letter-spacing:-.05px">Graphical Layout</div>
<div class="t am" style="left:444px;top:670px">activity_main.xml</div>
<svg width="1316" height="703">
<rect x="300.500" y="673.500" width="14" height="12" fill="#fff" stroke="#3a6aa8"/><path d="M300 676.500h14M306 677v9" stroke="#3a6aa8"/>
<rect x="425.500" y="673.500" width="13" height="13" rx="2" fill="#fff" stroke="#7a8aa0"/><path d="M428 677h8" stroke="#c04020"/><path d="M428 680h6" stroke="#3a7a3a"/><path d="M428 683h4" stroke="#c08020"/>
</svg>

<div class="t" style="left:1074px;top:646px;font-size:21px;line-height:22px;height:22px;color:#c4c4c4">激活 Windows</div>
<div class="t" style="left:1074px;top:671px;font-size:15px;letter-spacing:-.05px;color:#aebccb">转到"电脑设置"以激活 Windows。</div>

<svg width="1316" height="703">
<path d="M1273 8h7" stroke="#222" stroke-width="2"/>
<rect x="1298.500" y="4.500" width="7" height="6" fill="none" stroke="#333"/><rect x="1300.500" y="1.500" width="7" height="6" fill="#a2cd5c" stroke="#333"/>
<circle cx="8" cy="6.500" r="5.200" fill="#3f3a55" stroke="#d8d8e0" stroke-width="2.500"/>
</svg>
</body></html>
